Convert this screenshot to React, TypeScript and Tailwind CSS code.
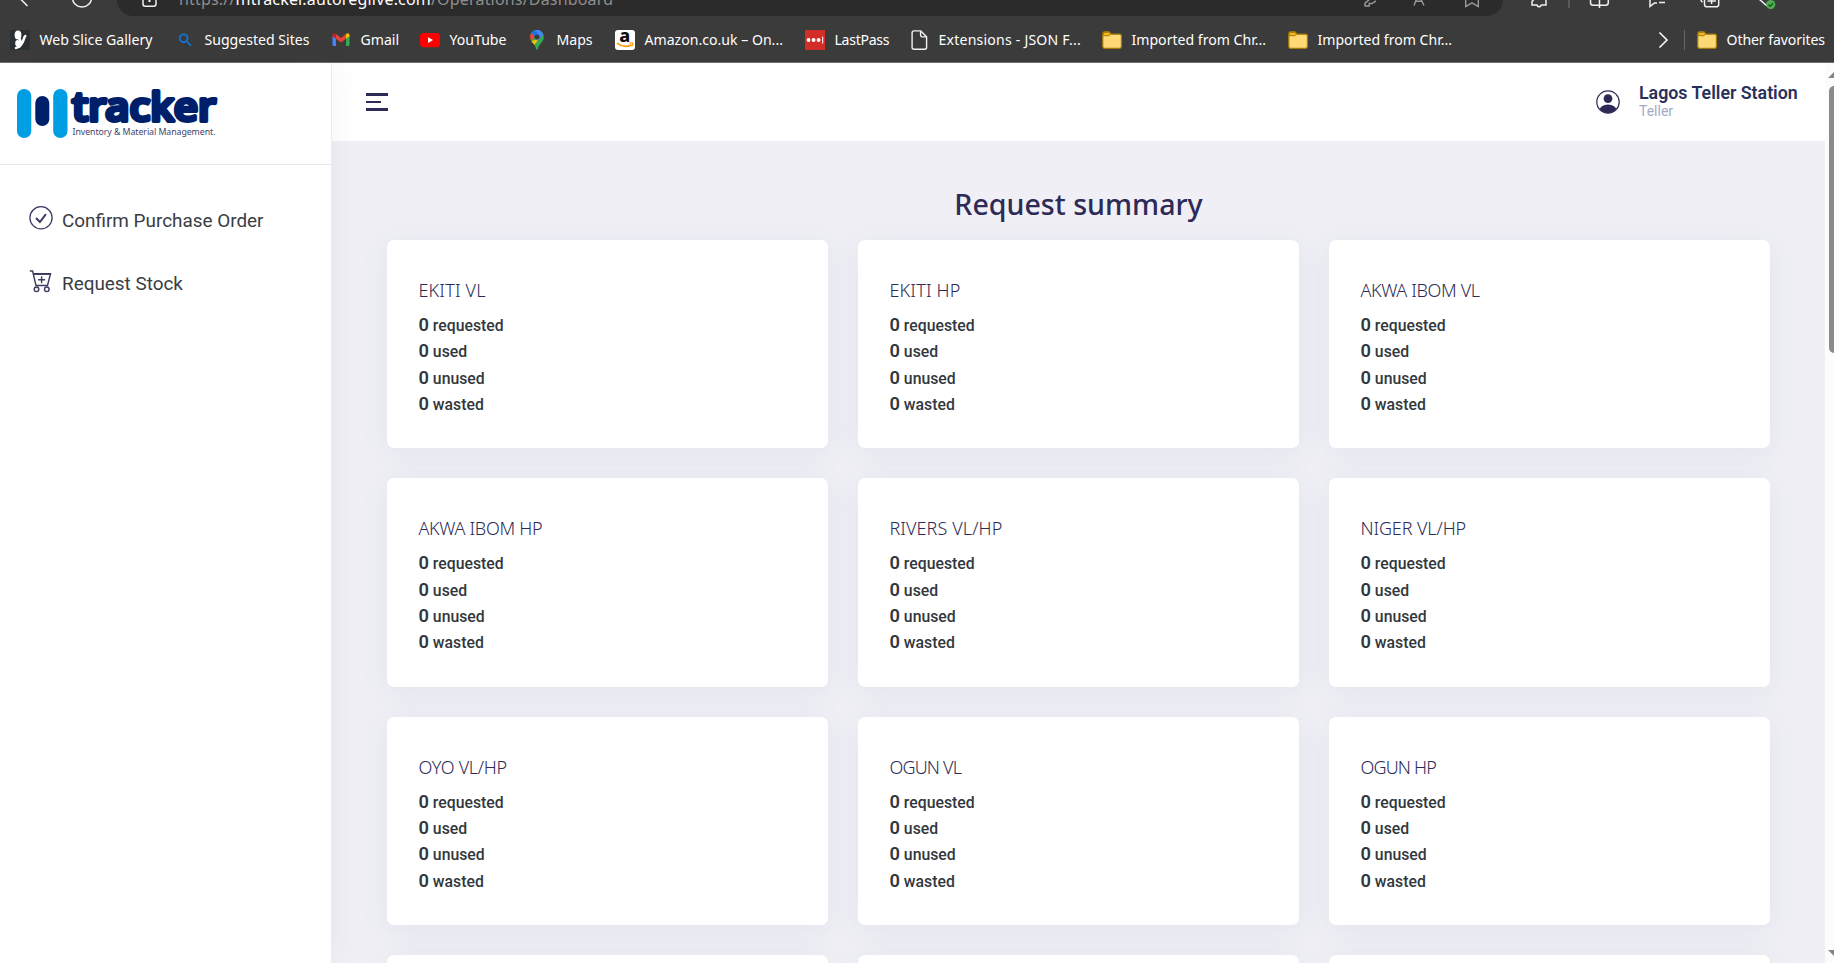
import type { ReactNode } from "react";

const FolderIcon = () => (
  <svg width="20" height="20" viewBox="0 0 20 20">
    <path d="M.8 4.2Q.8 1.8 2.6 1.8H7l2 2.4h8.6q1.8 0 1.8 1.8v10.6q0 1.8-1.8 1.8h-15q-1.8 0-1.8-1.8z" fill="#ffd976" stroke="#a77c08" strokeWidth="1.2" />
    <path d="M1.4 5.6V3.8q0-1.4 1.4-1.4h4L8.6 4 7 5.8z" fill="#f3b81f" stroke="#a77c08" strokeWidth="1" />
  </svg>
);

const bookmarks: { label: string; width: string; tracking?: string; icon: ReactNode }[] = [
  {
    label: "Web Slice Gallery",
    width: "w-[165px]",
    icon: (
      <svg width="20" height="20" viewBox="0 0 20 20">
        <rect width="20" height="20" fill="#2b3033" />
        <ellipse cx="8" cy="5" rx="3.4" ry="4.6" fill="#fff" />
        <ellipse cx="7.6" cy="13.2" rx="2.4" ry="3.2" fill="#fff" />
        <path d="M9 8c2 3 2 6 .5 8.5M6 18c3-.2 6.5-4 7.5-8 .6-2 1-3.4 1.8-4" fill="none" stroke="#fff" strokeWidth="2.6" strokeLinecap="round" />
      </svg>
    ),
  },
  {
    label: "Suggested Sites",
    width: "w-[156px]",
    icon: (
      <svg width="20" height="20" viewBox="0 0 20 20" fill="none" stroke="#1273cf" strokeWidth="1.9">
        <circle cx="8.7" cy="8.3" r="3.9" />
        <path d="M11.5 11.2l4.5 4.5" />
      </svg>
    ),
  },
  {
    label: "Gmail",
    width: "w-[89px]",
    icon: (
      <svg width="20" height="20" viewBox="0 0 20 20">
        <path d="M1.5 5.5v9.3q0 1.2 1.2 1.2H5V8.3z" fill="#4285f4" />
        <path d="M18.5 5.5v9.3q0 1.2-1.2 1.2H15V8.3z" fill="#34a853" />
        <path d="M1.5 5.5q0-2.5 2.5-2.1l1 .6v4.6l-3.5-2z" fill="#c5221f" />
        <path d="M18.5 5.5q0-2.5-2.5-2.1l-1 .6v4.6l3.5-2z" fill="#fbbc04" />
        <path d="M5 4l5 3.9L15 4v4.7l-5 3.9-5-3.9z" fill="#ea4335" />
      </svg>
    ),
  },
  {
    label: "YouTube",
    width: "w-[107px]",
    icon: (
      <svg width="20" height="20" viewBox="0 0 20 20">
        <rect y="3" width="20" height="14.2" rx="3.6" fill="#f00" />
        <path d="M8 7.2v5.7l5-2.85z" fill="#fff" />
      </svg>
    ),
  },
  {
    label: "Maps",
    width: "w-[88px]",
    icon: (
      <svg width="20" height="20" viewBox="0 0 20 20">
        <path d="M10 0a6.9 6.9 0 0 1 6.9 6.9c0 5-5.2 6.6-6.2 12.4q-.7 1.4-1.4 0C8.3 13.5 3.1 11.9 3.1 6.9A6.9 6.9 0 0 1 10 0z" fill="#34a853" />
        <path d="M3.1 6.9q0-2.7 1.6-4.5l4 3.4-4.3 5.2q-1.3-1.8-1.3-4.1z" fill="#ea4335" />
        <path d="M4.4 11L12 9.1l-4.5 5.7Q5.5 12.9 4.4 11z" fill="#fbbc04" />
        <path d="M4.7 2.4Q6.7 0 10 0q4.8.2 6.5 4.6L10 11 8.7 5.8z" fill="#4285f4" />
        <path d="M4.7 2.4Q6 .8 8 .3l3 3.4-3.4 3.2z" fill="#1a73e8" />
        <circle cx="10" cy="6.9" r="2.5" fill="#3b3b3b" />
      </svg>
    ),
  },
  {
    label: "Amazon.co.uk – On...",
    width: "w-[190px]",
    icon: (
      <svg width="20" height="20" viewBox="0 0 20 20">
        <rect width="20" height="20" rx="3" fill="#fff" />
        <text x="9.8" y="12" textAnchor="middle" fontFamily="Noto Sans, sans-serif" fontWeight="800" fontSize="18" fill="#111">a</text>
        <path d="M2 13.2q7 5.6 14.4 1.5" fill="none" stroke="#f90" strokeWidth="1.7" />
        <path d="M14.3 13.2q3.5-.9 3.6 0t-1.3 3.2" fill="none" stroke="#f90" strokeWidth="1.2" />
      </svg>
    ),
  },
  {
    label: "LastPass",
    width: "w-[104px]",
    tracking: "tracking-[-0.3px]",
    icon: (
      <svg width="20" height="20" viewBox="0 0 20 20">
        <rect width="20" height="20" fill="#d32d27" />
        <g fill="#fff">
          <circle cx="3.6" cy="10" r="1.9" />
          <circle cx="8.6" cy="10" r="1.9" />
          <circle cx="13.6" cy="10" r="1.9" />
          <rect x="17.2" y="6.6" width="1" height="7" />
        </g>
      </svg>
    ),
  },
  {
    label: "Extensions - JSON F...",
    width: "w-[193px]",
    tracking: "tracking-[0.2px]",
    icon: (
      <svg width="20" height="20" viewBox="0 0 20 20" fill="none" stroke="#f2f2f2" strokeWidth="1.4" strokeLinejoin="round">
        <path d="M5 .9h6.800l5.800 5.800v10.600q0 1.900-1.900 1.900H5q-1.900 0-1.900-1.900V2.800Q3.100.9 5 .9z" />
        <path d="M11.600 1.200v4q0 1.700 1.700 1.700h4" />
      </svg>
    ),
  },
  { label: "Imported from Chr...", width: "w-[186px]", icon: <FolderIcon /> },
  { label: "Imported from Chr...", width: "w-[180px]", icon: <FolderIcon /> },
];

function Bookmark({ label, icon, width, tracking = "tracking-normal" }: { label: string; icon: ReactNode; width: string; tracking?: string }) {
  return (
    <div className={`flex shrink-0 items-center gap-[9.5px] whitespace-nowrap ${width} ${tracking}`}>
      <span className="shrink-0">{icon}</span>
      <span className="pt-px">{label}</span>
    </div>
  );
}

function BrowserBar() {
  return (
    <div className="h-[63px] shrink-0 border-b border-[#6e6e6e] bg-[#3b3b3b] font-['Noto_Sans',sans-serif] text-white">
      <div className="flex h-4 overflow-hidden">
        <svg width="117" height="16" className="shrink-0" fill="none" stroke="#f0f0f0" strokeWidth="1.5">
          <path d="M18.5-3l9 9" />
          <circle cx="82" cy="-2.5" r="9.6" />
        </svg>
        <div className="flex h-4 w-[1386px] shrink-0 rounded-b-[18px] bg-[#2b2b2b]">
          <svg width="62" height="16" className="shrink-0" fill="none" stroke="#f0f0f0" strokeWidth="1.5">
            <path d="M26-4v8q0 2.2 2.2 2.2h8.6Q39 6.2 39 4v-8" />
            <path d="M32.5-1v3" strokeWidth="2" />
          </svg>
          <div className="-mt-[13.5px] h-6 text-[16px] leading-6 tracking-[0.18px] whitespace-nowrap text-[#8f8f8f]">
            https://<span className="text-white">mtracker.autoreglive.com</span>/Operations/Dashboard
          </div>
          <svg width="153" height="16" className="ml-auto shrink-0" fill="none" stroke="#9a9a9a" strokeWidth="1.4">
            <path d="M20-1l-5 4.200V6h4.200V3.500H22L26 .8" />
            <path d="M64 5.500L68.500-6l5.500 11.500M65.500 1.200H72" />
            <path d="M115.700-4V6.600l6.300-3.800 6.300 3.800V-4" />
          </svg>
        </div>
        <svg width="331" height="16" className="shrink-0" fill="none" stroke="#f0f0f0" strokeWidth="1.5">
          <path d="M29-4v2.400q3 1 0 3V5h4.800q2.200 3.700 4.600 0H43V-4" />
          <path d="M66 0v8" stroke="#666" />
          <path d="M96-4M87.500-4v6.500q0 2.800 2.800 2.800h12.200q2.800 0 2.800-2.800V-4M96.500-4V8" />
          <path d="M147-4V6.400L151.500 3H154M156 2.600h6" />
          <path d="M201.500-4V4.200q0 2.600 2.600 2.600h9q2.600 0 2.600-2.600V-4M208.600-2v6M204.500 1h8.500M198-2v2q0 1 1.500 2.200" />
          <path d="M256-1l8 7" />
          <circle cx="267.7" cy="4.600" r="4.600" fill="#4caf50" stroke="none" />
          <path d="M265.400 4.700l1.700 1.700 3-3.300" stroke="#17491a" strokeWidth="1.2" />
        </svg>
      </div>
      <div className="flex h-[47px] items-center pl-2.5 text-[14.1px] leading-5">
        {bookmarks.map((b, i) => (
          <Bookmark key={i} {...b} />
        ))}
        <svg width="12" height="18" viewBox="0 0 12 18" className="mr-[15px] ml-[189px] shrink-0" fill="none" stroke="#fff" strokeWidth="1.5">
          <path d="M2.500 1.500L10 9l-7.500 7.500" />
        </svg>
        <div className="mr-3 h-5 w-px shrink-0 bg-[#666]" />
        <Bookmark label="Other favorites" icon={<FolderIcon />} width="w-[132px]" tracking="tracking-[-0.1px]" />
      </div>
    </div>
  );
}

function Logo() {
  return (
    <svg width="210" height="56" viewBox="0 0 210 56">
      <rect x="2" y="4" width="14.3" height="49" rx="7.1" fill="#009ee2" />
      <rect x="20.3" y="11" width="14" height="30" rx="7" fill="#001f6b" />
      <rect x="38.2" y="4" width="14.3" height="49" rx="7.1" fill="#009ee2" />
      <text x="57" y="35.700" textLength="144" lengthAdjust="spacingAndGlyphs" fontFamily="Noto Sans, sans-serif" fontWeight="500" fontSize="39" fill="#001f6b" stroke="#001f6b" strokeWidth="4" strokeLinejoin="round">
        tracker
      </text>
      <text x="57.500" y="49.800" textLength="143" fontFamily="Noto Sans, sans-serif" fontSize="8.800" fill="#3c4470">
        Inventory &amp; Material Management.
      </text>
    </svg>
  );
}

function Sidebar() {
  return (
    <aside className="z-10 flex w-[332px] shrink-0 flex-col border-r border-[#e9ecf3] bg-white shadow-[0_0_28px_0_rgba(82,63,105,0.06)]">
      <div className="h-[102px] shrink-0 border-b border-[#e6e9f2] pt-[22px] pl-[15px]">
        <Logo />
      </div>
      <nav className="flex flex-col pt-[39px] pl-[29px] text-[18.9px] leading-6 text-[#3a3d44]">
        <a className="flex h-[63px] gap-[9px]">
          <svg width="24" height="24" viewBox="0 0 24 24" className="mt-[1.5px] shrink-0" fill="none" stroke="#3b3a60">
            <circle cx="12" cy="11.800" r="11.100" strokeWidth="1.3" />
            <path d="M7 12l3.900 4 6-7.800" strokeWidth="2" />
          </svg>
          <span className="pt-[5px]">Confirm Purchase Order</span>
        </a>
        <a className="flex h-[63px] gap-[9px]">
          <svg width="24" height="24" viewBox="0 0 24 24" className="mt-[1.5px] shrink-0" fill="none" stroke="#3b3a60" strokeWidth="1.4">
            <path d="M.8 2h2.800l3.400 14.500h11.500L21.500 4.700H4.300" />
            <path d="M4.300 5.200h17" />
            <path d="M12.600 7.200v7M9.100 10.700h7" />
            <circle cx="7.500" cy="20.300" r="2.300" />
            <circle cx="17.800" cy="20.300" r="2.300" />
          </svg>
          <span className="pt-[5px]">Request Stock</span>
        </a>
      </nav>
    </aside>
  );
}

function TopBar() {
  return (
    <header className="flex h-[78px] shrink-0 items-start justify-between bg-white pr-[26px] pl-[34px]">
      <div className="mt-[30px] flex w-[22px] flex-col">
        <span className="h-[3px] w-[22px] bg-[#2d2b55]" />
        <span className="mt-[5px] h-[2px] w-[15px] bg-[#2d2b55]" />
        <span className="mt-[5px] h-[3px] w-[22px] bg-[#2d2b55]" />
      </div>
      <div className="flex">
        <svg width="24" height="24" viewBox="0 0 24 24" className="mt-[26.500px] mr-[19px]">
          <defs>
            <clipPath id="avatar">
              <circle cx="12" cy="12" r="11" />
            </clipPath>
          </defs>
          <circle cx="12" cy="12" r="11.200" fill="none" stroke="#2d2b55" strokeWidth="1.2" />
          <circle cx="12" cy="8.600" r="4.400" fill="#2d2b55" />
          <ellipse cx="12" cy="20.500" rx="8.600" ry="6" fill="#2d2b55" clipPath="url(#avatar)" />
        </svg>
        <div className="w-[160px] pt-[19px] whitespace-nowrap">
          <div className="text-[17.800px] leading-[21px] font-semibold text-[#28305a]">Lagos Teller Station</div>
          <div className="text-[14px] leading-[17px] text-[#a3abc2]">Teller</div>
        </div>
      </div>
    </header>
  );
}

const cards: { name: string; tracking: string }[] = [
  { name: "EKITI VL", tracking: "tracking-[0.2px]" },
  { name: "EKITI HP", tracking: "tracking-[0.2px]" },
  { name: "AKWA IBOM VL", tracking: "tracking-[-0.35px]" },
  { name: "AKWA IBOM HP", tracking: "tracking-[-0.3px]" },
  { name: "RIVERS VL/HP", tracking: "tracking-[0.1px]" },
  { name: "NIGER VL/HP", tracking: "tracking-[-0.1px]" },
  { name: "OYO VL/HP", tracking: "tracking-[-0.3px]" },
  { name: "OGUN VL", tracking: "tracking-[-0.8px]" },
  { name: "OGUN HP", tracking: "tracking-[-0.8px]" },
  { name: "OSUN VL", tracking: "tracking-[-0.6px]" },
  { name: "OSUN HP", tracking: "tracking-[-0.6px]" },
  { name: "KANO VL/HP", tracking: "tracking-[-0.2px]" },
];

const states = ["requested", "used", "unused", "wasted"];

function SummaryCard({ name, tracking }: { name: string; tracking: string }) {
  return (
    <section className="h-[208.4px] rounded-[7px] bg-white px-[31.400px] pt-[37px] shadow-[0_5px_30px_0_rgba(90,110,150,0.08)]">
      <h4 className={`font-['Noto_Sans',sans-serif] text-[18px] leading-[26px] font-[350] text-[#2d2b55] ${tracking}`}>{name}</h4>
      <ul className="mt-[9px] text-[#32373d]">
        {states.map((s) => (
          <li key={s} className="flex h-[26.300px] items-baseline gap-1 leading-[26px] font-medium">
            <span className="text-[18.300px] font-semibold">0</span>
            <span className="text-[15.800px]">{s}</span>
          </li>
        ))}
      </ul>
    </section>
  );
}

function ScrollBar() {
  return (
    <div className="flex w-[9px] shrink-0 flex-col items-end justify-between overflow-hidden bg-[#fcfcfc] pt-[9px] pb-[7px]">
      <div className="flex flex-col items-end">
        <svg width="6" height="6" viewBox="0 0 6 6">
          <path d="M0 6L6 0v6z" fill="#858585" />
        </svg>
        <div className="mt-2 h-[267px] w-[5px] rounded-l-[5px] bg-[#8b8b8b]" />
      </div>
      <svg width="6" height="6" viewBox="0 0 6 6">
        <path d="M0 0h6v6z" fill="#858585" />
      </svg>
    </div>
  );
}

export default function App() {
  return (
    <div className="flex h-[963px] w-[1834px] flex-col overflow-hidden bg-white font-['Roboto',sans-serif]">
      <BrowserBar />
      <div className="flex min-h-0 flex-1">
        <Sidebar />
        <div className="flex min-w-0 flex-1 flex-col">
          <TopBar />
          <main className="min-h-0 flex-1 overflow-hidden bg-[#efeff5] px-[55px]">
            <h2 className="mt-10 mb-3.5 text-center font-['Noto_Sans',sans-serif] text-[28.600px] leading-[45px] font-medium text-[#2d2b55]">Request summary</h2>
            <div className="grid grid-cols-3 gap-[30px]">
              {cards.map((c) => (
                <SummaryCard key={c.name} {...c} />
              ))}
            </div>
          </main>
        </div>
        <ScrollBar />
      </div>
    </div>
  );
}
